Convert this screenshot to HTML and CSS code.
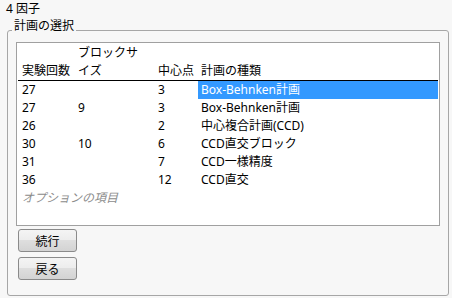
FILE: index.html
```html
<!DOCTYPE html>
<html>

<head>
    <title>計画の選択</title>
    <link rel="stylesheet" href="styles.css">
</head>

<body>
    <div class="title">4 因子</div>
    <fieldset class="group">
        <legend>計画の選択</legend>
        <div class="listbox">
            <table class="designs">
                <colgroup>
                    <col class="c-runs">
                    <col class="c-block">
                    <col class="c-center">
                    <col>
                </colgroup>
                <thead>
                    <tr>
                        <th>実験回数</th>
                        <th>ブロックサ<br>イズ</th>
                        <th>中心点</th>
                        <th>計画の種類</th>
                    </tr>
                </thead>
                <tbody>
                    <tr>
                        <td>27</td>
                        <td></td>
                        <td>3</td>
                        <td class="sel">Box-Behnken計画</td>
                    </tr>
                    <tr>
                        <td>27</td>
                        <td>9</td>
                        <td>3</td>
                        <td>Box-Behnken計画</td>
                    </tr>
                    <tr>
                        <td>26</td>
                        <td></td>
                        <td>2</td>
                        <td>中心複合計画(CCD)</td>
                    </tr>
                    <tr>
                        <td>30</td>
                        <td>10</td>
                        <td>6</td>
                        <td>CCD直交ブロック</td>
                    </tr>
                    <tr>
                        <td>31</td>
                        <td></td>
                        <td>7</td>
                        <td>CCD一様精度</td>
                    </tr>
                    <tr>
                        <td>36</td>
                        <td></td>
                        <td>12</td>
                        <td>CCD直交</td>
                    </tr>
                    <tr>
                        <td colspan="4" class="options">オプションの項目</td>
                    </tr>
                </tbody>
            </table>
        </div>
        <button class="btn">続行</button>
        <button class="btn">戻る</button>
    </fieldset>
</body>

</html>
```

FILE: styles.css
```css
html,
body {
    margin: 0;
    padding: 0;
    background: #f7f7f7;
    font-family: "Noto Sans", "Noto Sans CJK JP", sans-serif;
    font-size: 12px;
    color: #000;
}

.title {
    padding-left: 6px;
    line-height: 18px;
}

/* group box with its caption sitting on the border */
.group {
    margin: 0 3px 0 7px;
    padding: 0 8px 15px 8px;
    border: 1px solid #a6a6a6;
    border-radius: 3px;
}

.group legend {
    margin-left: -4px;
    padding: 0 2px 8px 2px;
    line-height: 16px;
}

.listbox {
    height: 182px;
    background: #fff;
    border: 1px solid #a0a0a0;
    margin-bottom: 3px;
}

.designs {
    margin-left: 1px;
    width: 420px;
    border-collapse: collapse;
    table-layout: fixed;
}

.c-runs {
    width: 57px;
}

.c-block {
    width: 80px;
}

.c-center {
    width: 43px;
}

.designs th,
.designs td {
    padding: 0 0 0 3px;
    line-height: 18px;
    height: 18px;
    text-align: left;
    font-weight: normal;
    white-space: nowrap;
}

.designs th {
    vertical-align: bottom;
    padding-top: 1px;
    border-bottom: 1px solid #000;
}

.designs th:first-child,
.designs td:first-child {
    padding-left: 4px;
}

.designs td.sel {
    background: #3399ff;
    color: #fff;
}

.designs td.options {
    color: #8c8c8c;
    font-style: italic;
}

.btn {
    display: block;
    width: 59px;
    height: 23px;
    margin: 0 0 5px 2px;
    padding: 0;
    font-family: inherit;
    font-size: 12px;
    color: #000;
    border: 1px solid #8a8a8a;
    border-radius: 3px;
    background: linear-gradient(#f4f4f4, #ececec 50%, #dedede 50%, #d3d3d3);
}

.btn:last-child {
    margin-bottom: 0;
}
```
